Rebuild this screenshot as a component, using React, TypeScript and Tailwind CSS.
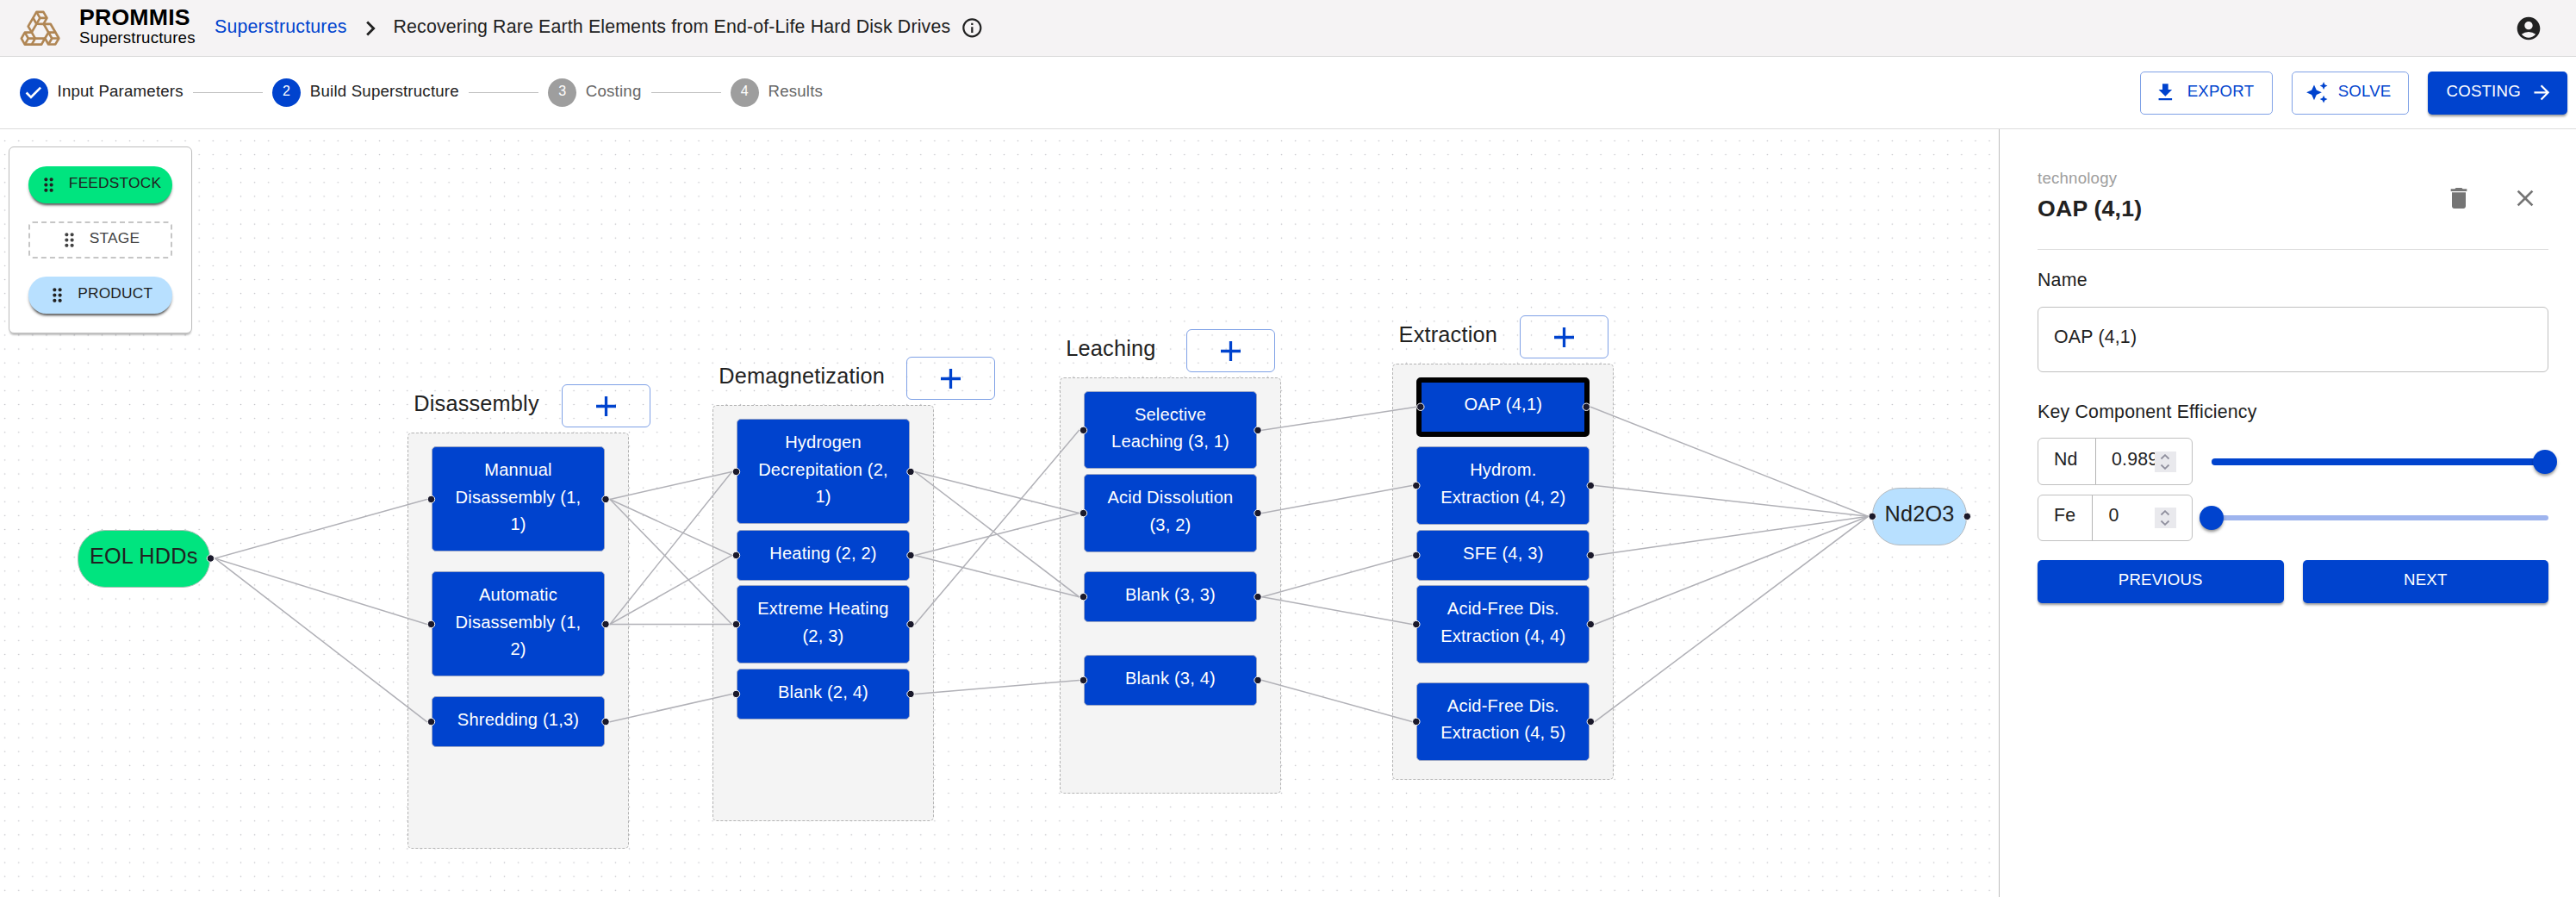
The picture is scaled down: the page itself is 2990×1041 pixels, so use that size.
import React from "react";
import {
  MdAccountCircle,
  MdArrowForward,
  MdAutoAwesome,
  MdChevronRight,
  MdClose,
  MdDelete,
  MdDragIndicator,
  MdFileDownload,
  MdInfoOutline,
} from "react-icons/md";

/* ---------- Graph data (window coordinates) ---------- */

const CANVAS_TOP = 150;
const LINE = 31.8;

type Tech = { y: number; lines: string[]; selected?: boolean };
type Stage = { name: string; x: number; y: number; plus: number; techs: Tech[] };

const stages: Stage[] = [
  {
    name: "Disassembly",
    x: 473,
    y: 502.4,
    plus: 652,
    techs: [
      { y: 518.4, lines: ["Mannual", "Disassembly (1,", "1)"] },
      { y: 663.4, lines: ["Automatic", "Disassembly (1,", "2)"] },
      { y: 808.4, lines: ["Shredding (1,3)"] },
    ],
  },
  {
    name: "Demagnetization",
    x: 827,
    y: 470.3,
    plus: 1052,
    techs: [
      { y: 486.4, lines: ["Hydrogen", "Decrepitation (2,", "1)"] },
      { y: 615.2, lines: ["Heating (2, 2)"] },
      { y: 679.4, lines: ["Extreme Heating", "(2, 3)"] },
      { y: 776.2, lines: ["Blank (2, 4)"] },
    ],
  },
  {
    name: "Leaching",
    x: 1230,
    y: 438.4,
    plus: 1377,
    techs: [
      { y: 454.2, lines: ["Selective", "Leaching (3, 1)"] },
      { y: 550.4, lines: ["Acid Dissolution", "(3, 2)"] },
      { y: 663.4, lines: ["Blank (3, 3)"] },
      { y: 760.2, lines: ["Blank (3, 4)"] },
    ],
  },
  {
    name: "Extraction",
    x: 1616.3,
    y: 422.4,
    plus: 1764,
    techs: [
      { y: 438, lines: ["OAP (4,1)"], selected: true },
      { y: 518.4, lines: ["Hydrom.", "Extraction (4, 2)"] },
      { y: 615.2, lines: ["SFE (4, 3)"] },
      { y: 679.4, lines: ["Acid-Free Dis.", "Extraction (4, 4)"] },
      { y: 792.3, lines: ["Acid-Free Dis.", "Extraction (4, 5)"] },
    ],
  },
];

const techHeight = (t: Tech) => (t.selected ? 68.5 : 58.5 + LINE * (t.lines.length - 1));

type Point = [number, number];

const handle = (stage: number, tech: number, side: "in" | "out"): Point => {
  const s = stages[stage];
  const t = s.techs[tech];
  const y = t.y + techHeight(t) / 2;
  const inset = t.selected ? 4.5 : -0.5;
  return side === "in" ? [s.x + 28 + inset, y] : [s.x + 229.5 - inset, y];
};

const feedOut: Point = [244.4, 648];
const productIn: Point = [2173.3, 599.3];
const productOut: Point = [2283.3, 599.3];

const between: [number, number, number][] = [
  [0, 0, 0],
  [0, 0, 1],
  [0, 0, 2],
  [0, 1, 0],
  [0, 1, 1],
  [0, 1, 2],
  [0, 2, 3],
  [1, 0, 1],
  [1, 0, 2],
  [1, 1, 1],
  [1, 1, 2],
  [1, 2, 0],
  [1, 3, 3],
  [2, 0, 0],
  [2, 1, 1],
  [2, 2, 2],
  [2, 2, 3],
  [2, 3, 4],
];

const edges: [Point, Point][] = [
  ...[0, 1, 2].map((i): [Point, Point] => [feedOut, handle(0, i, "in")]),
  ...between.map(([s, a, b]): [Point, Point] => [handle(s, a, "out"), handle(s + 1, b, "in")]),
  ...[0, 1, 2, 3, 4].map((i): [Point, Point] => [handle(3, i, "out"), productIn]),
];

const handles: Point[] = [
  feedOut,
  productIn,
  productOut,
  ...stages.flatMap((s, si) => s.techs.flatMap((_, ti) => [handle(si, ti, "in"), handle(si, ti, "out")])),
];

/* ---------- Header ---------- */

/* Three interlocking prisms, each a 120° turn of the first. */
function Logo() {
  return (
    <svg viewBox="25 18 141 126" className="h-[42px] w-[47px]" fill="none" stroke="#b08654" strokeWidth="8" strokeLinejoin="round">
      {[0, 120, 240].map((a) => (
        <g key={a} transform={`rotate(${a} 95.500 92)`}>
          <path d="M30.500 116L42.500 95H66.500L78.500 116L66.500 137H42.500Z" />
          <path d="M42.500 95L54.500 116L42.500 137M54.500 116H112L100.500 137H66.500" />
        </g>
      ))}
    </svg>
  );
}

function Header() {
  return (
    <header className="flex h-[66px] items-center border-b border-[#dcdcdc] bg-[#f5f3f4] pr-[39px] pl-[23px]">
      <Logo />
      <div className="ml-[22px] flex w-[157px] flex-col pb-[5px] text-black">
        <span className="text-[26.67px] leading-[26px] font-bold tracking-[0.0075em]">PROMMIS</span>
        <span className="pt-[1px] text-[18.67px] leading-[20px] tracking-[0.0107em]">Superstructures</span>
      </div>
      <nav className="flex items-center text-[21.33px] tracking-[0.0094em]">
        <span className="w-[154px] pb-[2px] text-[#0043ce]">Superstructures</span>
        <MdChevronRight className="mr-[10px] ml-[9.5px] size-[34px]" />
        <span className="pb-[2px] tracking-[0.0075em]">Recovering Rare Earth Elements from End-of-Life Hard Disk Drives</span>
        <MdInfoOutline className="ml-[11.5px] size-[26.67px]" />
      </nav>
      <MdAccountCircle className="ml-auto size-[32px]" />
    </header>
  );
}

/* ---------- Stepper and actions ---------- */

function Step({ n, label, state }: { n: number; label: string; state: "done" | "active" | "todo" }) {
  const todo = state === "todo";
  return (
    <div className="flex items-center">
      <span className={`flex size-[32.5px] items-center justify-center rounded-full text-[16px] ${todo ? "bg-[#9e9e9e] text-white" : "bg-[#0043ce] text-white"}`}>
        {state === "done" ? (
          <svg viewBox="0 0 24 24" className="size-[32px]" fill="currentColor">
            <path d="M9.7 17L5 12.3l1.400-1.400L9.700 14.200L17.400 6.500l1.400 1.400z" />
          </svg>
        ) : (
          <span className="pb-[3px]">{n}</span>
        )}
      </span>
      <span className={`pb-[3px] pl-[11px] text-[18.67px] tracking-[0.0107em] ${todo ? "text-[#666]" : "text-[#212121]"}`}>{label}</span>
    </div>
  );
}

function Connector() {
  return <span className="mx-[11px] h-px w-[81.5px] bg-[#bdbdbd]" />;
}

function Toolbar() {
  const outlined = "flex h-[50px] items-center rounded-[5px] border border-[#7fa1e6] text-[18.67px] tracking-[0.0107em] text-[#0043ce]";
  return (
    <div className="flex h-[84px] items-center border-b border-[#dcdcdc] bg-white pr-[10px] pl-[23px]">
      <Step n={1} label="Input Parameters" state="done" />
      <Connector />
      <Step n={2} label="Build Superstructure" state="active" />
      <Connector />
      <Step n={3} label="Costing" state="todo" />
      <Connector />
      <Step n={4} label="Results" state="todo" />
      <div className="ml-auto flex gap-[22px]">
        <button className={`${outlined} w-[154px] pl-[15px]`}>
          <MdFileDownload className="size-[26.67px]" />
          <span className="pb-[4px] pl-[12px]">EXPORT</span>
        </button>
        <button className={`${outlined} w-[136px] pl-[15px]`}>
          <MdAutoAwesome className="size-[26.67px]" />
          <span className="pb-[4px] pl-[11px]">SOLVE</span>
        </button>
        <button className="flex h-[50px] w-[162px] items-center rounded-[5px] bg-[#0043ce] pl-[21.5px] text-[18.67px] tracking-[0.0107em] text-white shadow-[0_3px_3px_-1px_rgba(0,0,0,.3),0_2px_3px_rgba(0,0,0,.14)]">
          <span className="pb-[4px]">COSTING</span>
          <MdArrowForward className="ml-[11.5px] size-[26.67px]" />
        </button>
      </div>
    </div>
  );
}

/* ---------- Canvas ---------- */

function Palette() {
  const item = "flex h-[42.5px] items-center justify-center text-[17.33px] tracking-[0.0107em]";
  const raised = "rounded-[21px] shadow-[0_4px_2px_-2px_rgba(0,0,0,.45),0_3px_3px_rgba(0,0,0,.25)]";
  return (
    <div className="absolute top-[20px] left-[10px] flex h-[217px] w-[213px] flex-col gap-[21.7px] rounded-[6px] border border-[#bdbdbd] bg-white px-[22px] pt-[22px] shadow-[0_3px_2px_-1px_rgba(0,0,0,.25)]">
      <div className={`${item} ${raised} bg-[#00e47f] pr-[2px]`}>
        <MdDragIndicator className="mr-[11px] size-[25px] shrink-0" />
        <span className="pb-[3px]">FEEDSTOCK</span>
      </div>
      <div className={`${item} rounded-[5px] border-2 border-dashed border-[#c6c6c6] pr-[3px] text-[#424242]`}>
        <MdDragIndicator className="mr-[11px] size-[25px] shrink-0" />
        <span className="pb-[3px]">STAGE</span>
      </div>
      <div className={`${item} ${raised} bg-[#b8e0ff] pr-[2px]`}>
        <MdDragIndicator className="mr-[11.5px] size-[25px] shrink-0" />
        <span className="pb-[3px]">PRODUCT</span>
      </div>
    </div>
  );
}

function StageGroup({ stage }: { stage: Stage }) {
  return (
    <>
      <div
        className="absolute h-[482.500px] w-[257px] rounded-[5px] border border-dashed border-[#b4b4b4] bg-[#f4f4f4]"
        style={{ left: stage.x, top: stage.y - CANVAS_TOP }}
      />
      <div
        className="absolute text-[25.3px] leading-[30px] tracking-[0.0075em]"
        style={{ left: stage.x + 7.300, top: stage.y - 49.8 - CANVAS_TOP }}
      >
        {stage.name}
      </div>
      <div
        className="absolute flex h-[50px] w-[103px] items-center justify-center rounded-[6px] border border-[#7fa1e6]"
        style={{ left: stage.plus, top: stage.y - 56.3 - CANVAS_TOP }}
      >
        <svg viewBox="0 0 23 23" className="size-[23px]" stroke="#0043ce" strokeWidth="3.3">
          <path d="M0 11.500H23M11.500 0V23" />
        </svg>
      </div>
    </>
  );
}

function TechNode({ x, tech }: { x: number; tech: Tech }) {
  return (
    <div
      className={`absolute flex w-[201px] flex-col items-center justify-center pb-[4px] text-[20.1px] leading-[31.8px] tracking-[0.0094em] whitespace-nowrap text-white ${
        tech.selected ? "rounded-[5px] border-[6px] border-black bg-[#0043ce]" : "rounded-[5px] border border-[#9aa5c4] bg-[#0043ce]"
      }`}
      style={{ left: x, top: tech.y - CANVAS_TOP, height: techHeight(tech) }}
    >
      {tech.lines.map((l) => (
        <span key={l}>{l}</span>
      ))}
    </div>
  );
}

function Canvas() {
  return (
    <main className="relative flex-1 overflow-hidden bg-white">
      <svg className="absolute inset-0 size-full">
        <defs>
          <pattern id="dots" x="-2.4" y="5.4" width="16.108" height="16.108" patternUnits="userSpaceOnUse">
            <circle cx="8.05" cy="8.05" r="0.78" fill="#bcbcc2" />
          </pattern>
        </defs>
        <rect width="100%" height="100%" fill="url(#dots)" />
      </svg>
      {stages.map((s) => (
        <StageGroup key={s.name} stage={s} />
      ))}
      <svg className="absolute inset-0 size-full" fill="none" stroke="#b1b1b7" strokeWidth="1.5">
        {edges.map(([a, b], i) => (
          <path key={i} d={`M${a[0]} ${a[1] - CANVAS_TOP}h5L${b[0] - 5} ${b[1] - CANVAS_TOP}h5`} />
        ))}
      </svg>
      {stages.map((s) => s.techs.map((t) => <TechNode key={t.y} x={s.x + 28} tech={t} />))}
      <div className="absolute top-[465px] left-[90px] flex h-[67px] w-[153.5px] items-center justify-center rounded-[32px] border border-[#a9bfb4] bg-[#00e47f] pb-[6px] text-[25.3px] tracking-[0.0075em]">
        EOL HDDs
      </div>
      <div className="absolute top-[416px] left-[2173px] flex h-[67px] w-[110px] items-center justify-center rounded-[32px] border border-[#b3b8bd] bg-[#b8e0ff] pb-[6px] text-[25.3px] tracking-[0.0075em]">
        Nd2O3
      </div>
      <svg className="absolute inset-0 size-full" fill="#1a192b" stroke="#fff" strokeWidth="1">
        {handles.map(([x, y], i) => (
          <circle key={i} cx={x} cy={y - CANVAS_TOP} r="4.200" />
        ))}
      </svg>
      <Palette />
    </main>
  );
}

/* ---------- Detail panel ---------- */

function Efficiency({ name, value, height, thumb }: { name: string; value: string; height: string; thumb: "start" | "end" }) {
  const end = thumb === "end";
  return (
    <div className="flex items-center">
      <div className={`flex w-[180px] items-stretch rounded-[6px] border border-[#c0c0c0] ${height}`}>
        <span className={`flex items-center border-r border-[#b4b4b4] pb-[4px] pl-[18px] ${end ? "w-[66.5px]" : "w-[63px]"}`}>{name}</span>
        <span className="relative flex flex-1 items-center pl-[18.5px]">
          <span className="pb-[4px]">{value}</span>
          <span className="absolute right-[18px] flex h-[24px] w-[25px] items-center justify-center bg-[#e9e9ed]">
            <svg viewBox="0 0 12 18" className="h-[18px] w-[12px]" fill="none" stroke="#8f8f9d" strokeWidth="1.8">
              <path d="M1.500 5.500L6 1.200L10.500 5.500M1.500 12.500L6 16.800L10.500 12.500" />
            </svg>
          </span>
        </span>
      </div>
      <div className={`ml-[22px] flex w-[392px] items-center rounded-full ${end ? "h-[8px] justify-end bg-[#0043ce]" : "h-[6px] justify-start bg-[#9eb4ee]"}`}>
        <span
          className={`size-[28px] shrink-0 rounded-full bg-[#0043ce] shadow-[0_3px_3px_-1px_rgba(0,0,0,.3),0_2px_4px_rgba(0,0,0,.2)] ${
            end ? "-mr-[10px]" : "-ml-[14px]"
          }`}
        />
      </div>
    </div>
  );
}

function DetailPanel() {
  const action =
    "flex h-[50px] flex-1 items-center justify-center rounded-[5px] bg-[#0043ce] pb-[4px] text-[18.67px] tracking-[0.0107em] text-white shadow-[0_3px_3px_-1px_rgba(0,0,0,.3),0_2px_3px_rgba(0,0,0,.14)]";
  return (
    <aside className="flex w-[670px] shrink-0 flex-col border-l border-[#bdbdbd] bg-white pr-[32px] pl-[44px] text-[21.33px] tracking-[0.0094em]">
      <div className="flex h-[140px] items-center border-b border-[#dedede] pt-[20px]">
        <div className="flex flex-col pb-[6px]">
          <span className="text-[18.67px] leading-[32px] tracking-[0.0107em] text-[#9e9e9e]">technology</span>
          <span className="text-[26.67px] leading-[39px] font-bold tracking-[0.0075em]">OAP (4,1)</span>
        </div>
        <MdDelete className="mr-[45px] ml-auto size-[32px] text-[#757575]" />
        <MdClose className="mr-[11px] size-[32px] text-[#757575]" />
      </div>
      <label className="mt-[19px] leading-[32px]">Name</label>
      <div className="mt-[15px] flex h-[76px] items-center rounded-[6px] border border-[#c0c0c0] pb-[4px] pl-[18px]">OAP (4,1)</div>
      <label className="mt-[30px] leading-[32px]">Key Component Efficiency</label>
      <div className="mt-[14px] flex flex-col gap-[11px]">
        <Efficiency name="Nd" value="0.989" height="h-[55px]" thumb="end" />
        <Efficiency name="Fe" value="0" height="h-[54px]" thumb="start" />
      </div>
      <div className="mt-[22px] flex gap-[22px]">
        <button className={action}>PREVIOUS</button>
        <button className={action}>NEXT</button>
      </div>
    </aside>
  );
}

export default function App() {
  return (
    <div className="flex h-[1041px] w-[2990px] flex-col overflow-hidden bg-white font-['Liberation_Sans',Arial,sans-serif] text-[#212121]">
      <Header />
      <Toolbar />
      <div className="flex min-h-0 flex-1">
        <Canvas />
        <DetailPanel />
      </div>
    </div>
  );
}
